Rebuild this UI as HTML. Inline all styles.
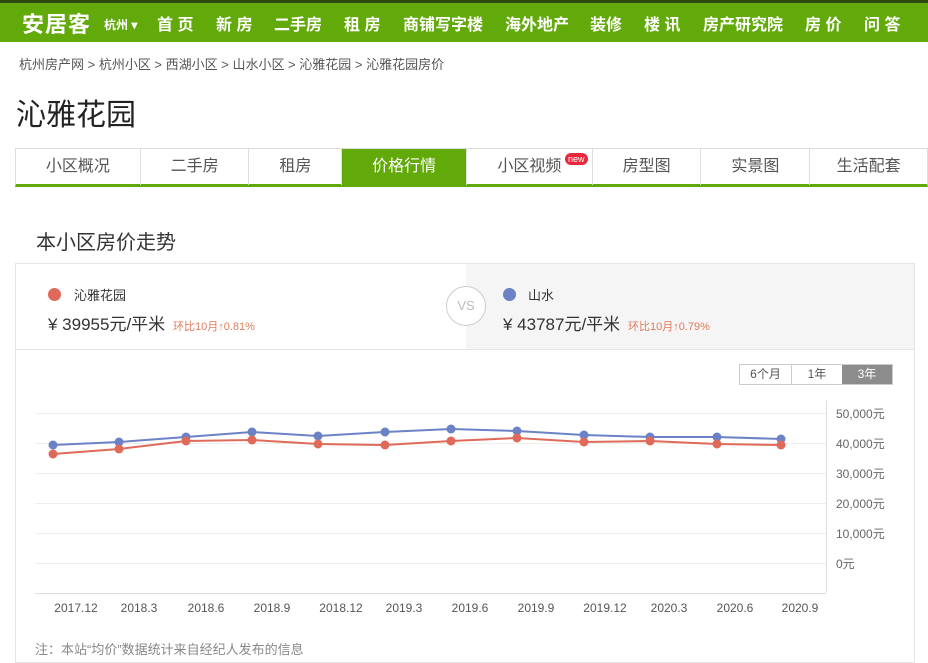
<!DOCTYPE html>
<html><head><meta charset="utf-8"><style>
*{margin:0;padding:0;box-sizing:border-box}
body{width:928px;height:660px;overflow:hidden;background:#fff;font-family:"Liberation Sans","Noto Sans CJK SC",sans-serif;color:#333;position:relative}
.top{position:absolute;left:0;top:0;width:928px;height:42px;background:#62a90a;border-top:3px solid #2f4a10}
.top span{position:absolute;top:8px;color:#fff;font-size:16px;font-weight:bold;white-space:nowrap}
.logo{font-size:22px!important;top:4px!important;letter-spacing:1px}
.crumb{position:absolute;left:19px;top:54px;font-size:13px;color:#555}
h1{position:absolute;left:16px;top:90px;font-size:30px;font-weight:normal;color:#222}
.tabs{position:absolute;left:15px;top:148px;width:913px;height:39px;border:1px solid #ddd;border-bottom:3px solid #62a90a;display:flex}
.tabs div{height:36px;line-height:36px;text-align:center;font-size:16px;color:#555;border-right:1px solid #ddd;position:relative}
.tabs .on{background:#62a90a;color:#fff}
.new{position:absolute;left:565px;top:153px;background:#e8283c;color:#fff;font-size:9px;border-radius:6px;padding:0 3px;line-height:12px}
h2{position:absolute;left:36px;top:226px;font-size:20px;font-weight:normal;color:#333}
.panel{position:absolute;left:15px;top:263px;width:900px;height:400px;border:1px solid #e5e5e5}
.cmp{position:absolute;left:0;top:0;width:898px;height:86px;border-bottom:1px solid #e5e5e5}
.right{position:absolute;left:450px;top:0;width:448px;height:85px;background:#f5f5f5}
.vs{position:absolute;left:430px;top:22px;width:40px;height:40px;border:1px solid #ccc;border-radius:50%;background:#fff;color:#bbb;text-align:center;line-height:38px;font-size:13px}
.dot{position:absolute;width:13px;height:13px;border-radius:50%}
.t{position:absolute;white-space:nowrap}
.btns{position:absolute;left:739px;top:364px;height:21px;display:flex;border:1px solid #ccc;font-size:12px}
.btns div{line-height:19px;text-align:center;color:#555}
</style></head><body>
<div class="top">
<span class="logo" style="left:22px">安居客</span>
<span style="left:104px;font-size:12px;top:13px">杭州 ▾</span>
<span style="left:157px">首 页</span>
<span style="left:216px">新 房</span>
<span style="left:274px">二手房</span>
<span style="left:344px">租 房</span>
<span style="left:403px">商铺写字楼</span>
<span style="left:505px">海外地产</span>
<span style="left:590px">装修</span>
<span style="left:644px">楼 讯</span>
<span style="left:703px">房产研究院</span>
<span style="left:805px">房 价</span>
<span style="left:864px">问 答</span>
</div>
<div class="crumb">杭州房产网 &gt; 杭州小区 &gt; 西湖小区 &gt; 山水小区 &gt; 沁雅花园 &gt; 沁雅花园房价</div>
<h1>沁雅花园</h1>
<div class="tabs">
<div style="width:125px">小区概况</div><div style="width:109px">二手房</div><div style="width:93px">租房</div><div class="on" style="width:125px">价格行情</div><div style="width:126px">小区视频</div><div style="width:109px">房型图</div><div style="width:109px">实景图</div><div style="width:117px;border:none">生活配套</div>
</div>
<div class="new">new</div>
<h2>本小区房价走势</h2>
<div class="panel">
<div class="cmp"></div>
<div class="right"></div>
<div class="vs">VS</div>
</div>
<div class="dot" style="left:48px;top:288px;background:#e06a5a"></div>
<div class="t" style="left:74px;top:285px;font-size:13px">沁雅花园</div>
<div class="t" style="left:48px;top:310px;font-size:17px">¥ 39955元/平米 <span style="font-size:11px;color:#e07b5b">&nbsp;环比10月↑0.81%</span></div>
<div class="dot" style="left:503px;top:288px;background:#6b82c6"></div>
<div class="t" style="left:528px;top:285px;font-size:13px">山水</div>
<div class="t" style="left:503px;top:310px;font-size:17px">¥ 43787元/平米 <span style="font-size:11px;color:#e07b5b">&nbsp;环比10月↑0.79%</span></div>
<div class="btns"><div style="width:52px;border-right:1px solid #ccc">6个月</div><div style="width:50px">1年</div><div style="width:50px;background:#8c8c8c;color:#fff">3年</div></div>
<svg style="position:absolute;left:0;top:0" width="928" height="660">
<g stroke="#eee" stroke-width="1">
<line x1="35" y1="413.5" x2="826" y2="413.5"/><line x1="35" y1="443.5" x2="826" y2="443.5"/><line x1="35" y1="473.5" x2="826" y2="473.5"/><line x1="35" y1="503.5" x2="826" y2="503.5"/><line x1="35" y1="533.5" x2="826" y2="533.5"/><line x1="35" y1="563.5" x2="826" y2="563.5"/>
</g>
<line x1="826.5" y1="400" x2="826.5" y2="593" stroke="#ddd"/>
<line x1="35" y1="593.5" x2="826" y2="593.5" stroke="#ddd"/>
<g font-size="12" fill="#666" font-family="Liberation Sans,sans-serif">
<text x="836" y="418">50,000元</text><text x="836" y="448">40,000元</text><text x="836" y="478">30,000元</text><text x="836" y="508">20,000元</text><text x="836" y="538">10,000元</text><text x="836" y="568">0元</text>
</g>
<g font-size="12" fill="#555" text-anchor="middle" font-family="Liberation Sans,sans-serif">
<text x="76" y="612">2017.12</text><text x="139" y="612">2018.3</text><text x="206" y="612">2018.6</text><text x="272" y="612">2018.9</text><text x="341" y="612">2018.12</text><text x="404" y="612">2019.3</text><text x="470" y="612">2019.6</text><text x="536" y="612">2019.9</text><text x="605" y="612">2019.12</text><text x="669" y="612">2020.3</text><text x="735" y="612">2020.6</text><text x="800" y="612">2020.9</text>
</g>
<polyline fill="none" stroke="#6b82c6" stroke-width="2" points="53,445 119,442 186,437 252,432 318,436 385,432 451,429 517,431 584,435 650,437 717,437 781,439"/>
<polyline fill="none" stroke="#e06a5a" stroke-width="2" points="53,454 119,449 186,441 252,440 318,444 385,445 451,441 517,438 584,442 650,441 717,444 781,445"/>
<g fill="#6b82c6"><circle cx="53" cy="445" r="4.5"/><circle cx="119" cy="442" r="4.5"/><circle cx="186" cy="437" r="4.5"/><circle cx="252" cy="432" r="4.5"/><circle cx="318" cy="436" r="4.5"/><circle cx="385" cy="432" r="4.5"/><circle cx="451" cy="429" r="4.5"/><circle cx="517" cy="431" r="4.5"/><circle cx="584" cy="435" r="4.5"/><circle cx="650" cy="437" r="4.5"/><circle cx="717" cy="437" r="4.5"/><circle cx="781" cy="439" r="4.5"/></g>
<g fill="#e06a5a"><circle cx="53" cy="454" r="4.5"/><circle cx="119" cy="449" r="4.5"/><circle cx="186" cy="441" r="4.5"/><circle cx="252" cy="440" r="4.5"/><circle cx="318" cy="444" r="4.5"/><circle cx="385" cy="445" r="4.5"/><circle cx="451" cy="441" r="4.5"/><circle cx="517" cy="438" r="4.5"/><circle cx="584" cy="442" r="4.5"/><circle cx="650" cy="441" r="4.5"/><circle cx="717" cy="444" r="4.5"/><circle cx="781" cy="445" r="4.5"/></g>
</svg>
<div class="t" style="left:35px;top:639px;font-size:13px;color:#888">注：本站“均价”数据统计来自经纪人发布的信息</div>
</body></html>
